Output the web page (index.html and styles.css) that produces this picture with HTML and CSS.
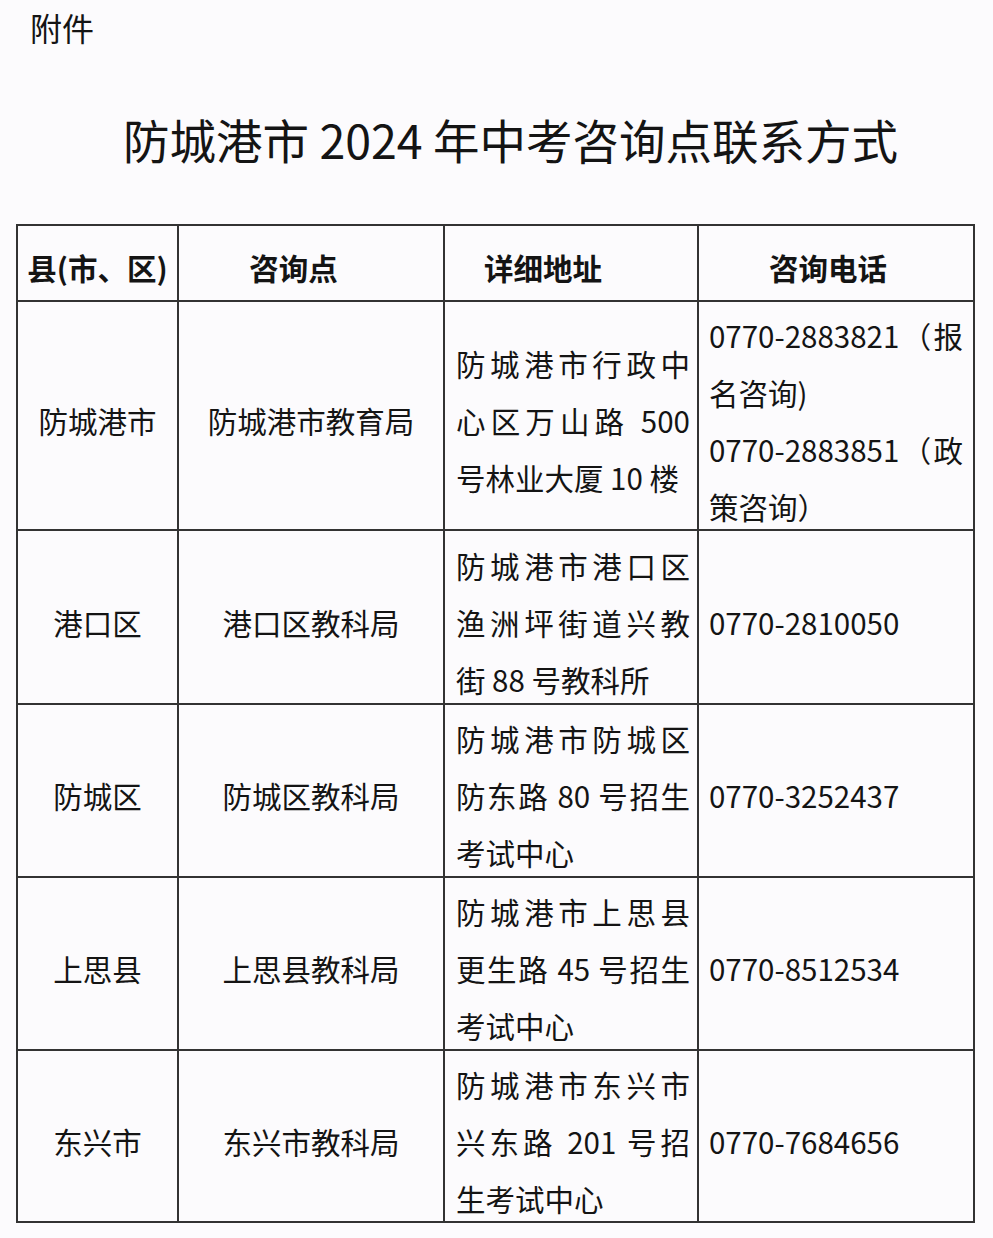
FILE: index.html
```html
<!DOCTYPE html>
<html lang="zh-CN">
<head>
<meta charset="utf-8">
<title>防城港市2024年中考咨询点联系方式</title>
<link rel="stylesheet" href="styles.css">
</head>
<body>
<div class="page">
  <p class="attach">附件</p>
  <h1 class="title">防城港市 2024 年中考咨询点联系方式</h1>
  <div class="grid">
    <div class="cell head c1"><span>县(市、区)</span></div>
    <div class="cell head c2"><span>咨询点</span></div>
    <div class="cell head c3"><span>详细地址</span></div>
    <div class="cell head c4"><span>咨询电话</span></div>

    <div class="cell center"><span>防城港市</span></div>
    <div class="cell center"><span>防城港市教育局</span></div>
    <div class="cell addr"><p>防城港市行政中心区万山路 500 号林业大厦 10 楼</p></div>
    <div class="cell phone"><div class="phones"><p>0770-2883821（报名咨询)</p><p>0770-2883851（政策咨询）</p></div></div>

    <div class="cell center"><span>港口区</span></div>
    <div class="cell center"><span>港口区教科局</span></div>
    <div class="cell addr"><p>防城港市港口区渔洲坪街道兴教街 88 号教科所</p></div>
    <div class="cell phone"><p>0770-2810050</p></div>

    <div class="cell center"><span>防城区</span></div>
    <div class="cell center"><span>防城区教科局</span></div>
    <div class="cell addr"><p>防城港市防城区防东路 80 号招生考试中心</p></div>
    <div class="cell phone"><p>0770-3252437</p></div>

    <div class="cell center"><span>上思县</span></div>
    <div class="cell center"><span>上思县教科局</span></div>
    <div class="cell addr"><p>防城港市上思县更生路 45 号招生考试中心</p></div>
    <div class="cell phone"><p>0770-8512534</p></div>

    <div class="cell center"><span>东兴市</span></div>
    <div class="cell center"><span>东兴市教科局</span></div>
    <div class="cell addr"><p>防城港市东兴市兴东路 201 号招生考试中心</p></div>
    <div class="cell phone"><p>0770-7684656</p></div>
  </div>
</div>
</body>
</html>
```

FILE: styles.css
```css
html, body {
  margin: 0;
  padding: 0;
  background: #fcfbfd;
}

body {
  font-family: "Noto Sans CJK SC", "Noto Sans", sans-serif;
  color: #141414;
}

.page {
  width: 993px;
  min-height: 1238px;
  padding-top: 5px;
  box-sizing: border-box;
}

.attach {
  margin: 0 0 0 30px;
  font-size: 32px;
  line-height: 44px;
}

.title {
  margin: 60px 0 0 0;
  text-align: center;
  font-size: 46.5px;
  font-weight: 400;
  line-height: 60px;
  padding-left: 28px;
}

.grid {
  margin: 55px 0 0 16px;
  width: 959px;
  box-sizing: border-box;
  padding: 2px;
  background: #333333;
  display: grid;
  gap: 2px;
  grid-template-columns: 159px 264px 252px 274px;
  grid-template-rows: 74px 227px 172px 171px 171px 170px;
}

.cell {
  background: #fcfbfd;
  display: flex;
  align-items: center;
  box-sizing: border-box;
  padding-top: 10px;
  font-size: 29.5px;
  line-height: 57px;
  min-width: 0;
}

.cell p {
  margin: 0;
  width: 100%;
  text-align: justify;
}

.head {
  font-weight: 700;
  justify-content: center;
  padding-top: 8px;
}

.head.c2 { padding-right: 35px; }
.head.c3 { padding-right: 56px; }
.head.c4 { padding-right: 16px; }

.center {
  justify-content: center;
}

.addr {
  padding-left: 11px;
  padding-right: 7px;
}

.phone {
  padding-left: 10px;
  padding-right: 10px;
}

.phones {
  width: 100%;
}
```
